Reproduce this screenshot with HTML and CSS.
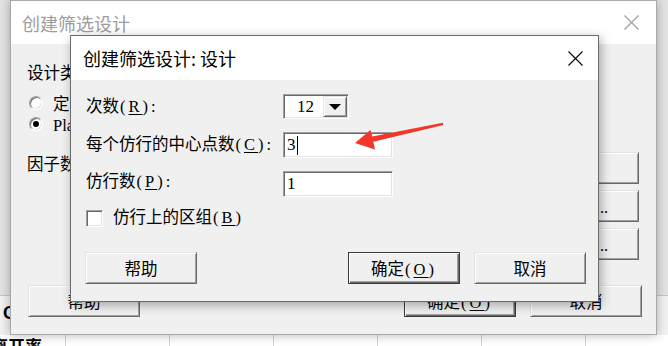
FILE: index.html
```html
<!DOCTYPE html>
<html lang="zh-CN">
<head>
    <meta charset="UTF-8">
    <meta name="viewport" content="width=device-width, initial-scale=1.0">
    <title>创建筛选设计: 设计</title>
    <link rel="stylesheet" href="styles.css">
</head>
<body>
    <div class="sheet">
        <div class="sheet-top"></div>
        <div class="sheet-head"><span class="col-name">C</span></div>
        <div class="sheet-row">
            <div class="cell"><b class="cell-title">离开率</b></div>
            <div class="cell"></div>
            <div class="cell"></div>
            <div class="cell"></div>
            <div class="cell"></div>
            <div class="cell"></div>
            <div class="cell"></div>
        </div>
    </div>

    <div class="window back">
        <div class="titlebar">
            <span class="title">创建筛选设计</span>
            <span class="close"><svg width="15" height="15" viewBox="0 0 15 15"><path d="M0.5 0.5L14.5 14.5M14.5 0.5L0.5 14.5" stroke="currentColor" stroke-width="1.1" fill="none"/></svg></span>
        </div>
        <div class="body">
            <div class="main">
                <div class="options">
                    <div class="label">设计类型</div>
                    <div class="radio-list">
                        <div class="radio"><span class="dot"></span><span>定义性筛选设计(<u>D</u>)</span></div>
                        <div class="radio checked"><span class="dot"></span><span>Plackett-Burman 设计(<u>L</u>)</span></div>
                    </div>
                    <div class="label factors">因子数<span class="key">(<u>N</u>):</span></div>
                </div>
                <div class="side-buttons">
                    <button class="btn short">设计</button>
                    <button class="btn">选项...</button>
                    <button class="btn">结果...</button>
                </div>
            </div>
            <div class="foot">
                <button class="btn">帮助</button>
                <button class="btn default">确定<span class="key">(<u>O</u>)</span></button>
                <button class="btn">取消</button>
            </div>
        </div>
    </div>

    <div class="window front">
        <div class="titlebar">
            <span class="title">创建筛选设计: 设计</span>
            <span class="close"><svg width="15" height="15" viewBox="0 0 15 15"><path d="M0.5 0.5L14.5 14.5M14.5 0.5L0.5 14.5" stroke="currentColor" stroke-width="1.1" fill="none"/></svg></span>
        </div>
        <div class="body">
            <div class="form">
                <div class="label">次数<span class="key">(<u>R</u>):</span></div>
                <div class="combo">
                    <span class="combo-value">12</span>
                    <span class="combo-btn"><span class="tri"></span></span>
                </div>
                <div class="label">每个仿行的中心点数<span class="key">(<u>C</u>):</span></div>
                <div class="field"><span>3</span><span class="caret"></span></div>
                <div class="label row3">仿行数<span class="key">(<u>P</u>):</span></div>
                <div class="field"><span>1</span></div>
            </div>
            <div class="check"><span class="box"></span><span>仿行上的区组<span class="key">(<u>B</u>)</span></span></div>
            <div class="foot">
                <button class="btn">帮助</button>
                <button class="btn default">确定<span class="key">(<u>O</u>)</span></button>
                <button class="btn">取消</button>
            </div>
        </div>
    </div>

    <svg class="arrow" width="668" height="346" viewBox="0 0 668 346">
        <polygon points="355,143 370.5,130 372.3,136.6 442.8,122.8 443.4,125 373.3,141.8 375,149.5" fill="#f2362b"/>
    </svg>
</body>
</html>
```

FILE: styles.css
```css
* {
    box-sizing: border-box;
}
body {
    margin: 0;
    width: 668px;
    height: 346px;
    overflow: hidden;
    position: relative;
    font-family: "Liberation Serif", "Noto Sans CJK SC", serif;
    font-size: 16.5px;
    color: #000;
    background: #f6f6f6;
}
u {
    text-decoration-thickness: 1px;
    text-underline-offset: 2px;
}
.key {
    letter-spacing: 3px;
    margin-left: 1px;
}

/* spreadsheet behind the dialogs */
.sheet-top {
    height: 296px;
    background: #e3e3e3;
    border-bottom: 1px solid #c4c4c4;
}
.sheet-head {
    height: 39px;
    padding: 7px 0 0 3px;
    background: #f2f2f2;
    font: bold 18px "Liberation Sans", sans-serif;
}
.sheet-row {
    display: grid;
    grid-template-columns: 66px repeat(6, 104px);
    height: 11px;
    background: #fff;
}
.cell {
    border-right: 1px solid #d4d4d4;
    overflow: hidden;
}
.cell-title {
    display: block;
    margin: 0 0 0 -9px;
    font: bold 17px/22px "Noto Sans CJK SC", sans-serif;
    white-space: nowrap;
}

/* windows */
.window {
    position: absolute;
    display: flex;
    flex-direction: column;
    background: #f0f0f0;
}
.back {
    left: 10px;
    top: 0;
    width: 647px;
    height: 335px;
    border: 1px solid #a9a9a9;
    box-shadow: 0 0 10px rgba(0, 0, 0, 0.3);
}
.front {
    left: 70px;
    top: 35px;
    width: 529px;
    height: 267px;
    border: 1px solid #6b6b6b;
    box-shadow: 2px 3px 10px rgba(0, 0, 0, 0.32);
}
.titlebar {
    flex: none;
    height: 44px;
    display: flex;
    align-items: center;
    justify-content: space-between;
    background: #fff;
    font-family: "Noto Sans CJK SC", sans-serif;
    font-size: 18px;
    line-height: 24px;
}
.back .titlebar {
    height: 43px;
    padding: 0 17px 0 11px;
    color: #9c9c9c;
}
.front .titlebar {
    padding: 0 15px 0 12px;
}
.close svg {
    display: block;
}
.label {
    line-height: 20px;
    white-space: nowrap;
}

/* classic 3d controls */
.btn {
    width: 112px;
    height: 32px;
    padding: 0;
    font: inherit;
    color: #000;
    background: #f0f0f0;
    border: 1px solid;
    border-color: #e3e3e3 #696969 #696969 #e3e3e3;
    box-shadow: inset 1px 1px #fff, inset -1px -1px #a0a0a0;
}
.btn.default {
    border-color: #3a3a3a;
    box-shadow: inset 1px 1px #fff, inset -1px -1px #696969, inset -2px -2px #a0a0a0;
}
.field,
.combo {
    background: #fff;
    border: 1px solid;
    border-color: #a0a0a0 #fff #fff #a0a0a0;
    box-shadow: inset 1px 1px #696969, inset -1px -1px #e3e3e3;
}

/* back dialog */
.back .body {
    flex: 1;
    display: flex;
    flex-direction: column;
    padding: 20px 14px 17px 16px;
}
.main {
    flex: 1;
    display: flex;
    justify-content: space-between;
}
.radio-list {
    margin-top: 8px;
}
.radio {
    display: flex;
    align-items: center;
    gap: 10px;
    height: 21px;
    white-space: nowrap;
}
.dot {
    width: 14px;
    height: 14px;
    margin-left: 2px;
    border-radius: 50%;
    background: #fff;
    border: 1px solid;
    border-color: #a0a0a0 #fff #fff #a0a0a0;
    box-shadow: inset 1px 1px #696969, inset -1px -1px #e3e3e3;
    display: flex;
    align-items: center;
    justify-content: center;
}
.checked .dot::after {
    content: "";
    width: 6px;
    height: 6px;
    border-radius: 50%;
    background: #000;
}
.factors {
    margin-top: 21px;
}
.side-buttons {
    display: flex;
    flex-direction: column;
    gap: 6px;
    padding-top: 88px;
    margin-right: 3px;
}
.side-buttons .btn {
    padding-left: 5px;
}
.side-buttons .btn.short {
    padding: 0 12px 0 0;
}
.foot {
    display: flex;
    gap: 14px;
}
.foot .btn:first-child {
    margin-right: auto;
}
.back .foot .btn:first-child {
    margin-left: 1px;
}

/* front dialog */
.front .body {
    flex: 1;
    padding: 14px 12px 0 15px;
}
.form {
    display: grid;
    grid-template-columns: 197px auto;
    grid-template-rows: 25px 26px 26px;
    row-gap: 13px;
    align-items: center;
}
.row3 {
    margin-top: -5px;
}
.combo {
    width: 66px;
    height: 25px;
    display: flex;
    padding: 1px;
}
.combo-value {
    flex: 1;
    text-align: center;
    line-height: 21px;
    font-size: 17px;
    padding-left: 3px;
}
.combo-btn {
    width: 24px;
    display: flex;
    align-items: center;
    justify-content: center;
    background: #f0f0f0;
    border: 1px solid;
    border-color: #e3e3e3 #696969 #696969 #e3e3e3;
    box-shadow: inset 1px 1px #fff, inset -1px -1px #a0a0a0;
}
.tri {
    width: 0;
    height: 0;
    border-left: 6px solid transparent;
    border-right: 6px solid transparent;
    border-top: 6px solid #000;
}
.field {
    width: 110px;
    height: 26px;
    display: flex;
    align-items: center;
    padding: 0 3px;
    font-size: 17px;
}
.caret {
    width: 1px;
    height: 19px;
    margin-left: 1px;
    background: #000;
}
.check {
    display: flex;
    align-items: center;
    gap: 10px;
    height: 18px;
    margin-top: 12px;
    line-height: 20px;
}
.box {
    width: 17px;
    height: 17px;
    background: #fff;
    border: 1px solid;
    border-color: #a0a0a0 #fff #fff #a0a0a0;
    box-shadow: inset 1px 1px #696969, inset -1px -1px #e3e3e3;
}
.front .foot {
    margin-top: 25px;
}
.front .foot .btn:first-child {
    margin-left: -1px;
}

.arrow {
    position: absolute;
    left: 0;
    top: 0;
    pointer-events: none;
}
```
